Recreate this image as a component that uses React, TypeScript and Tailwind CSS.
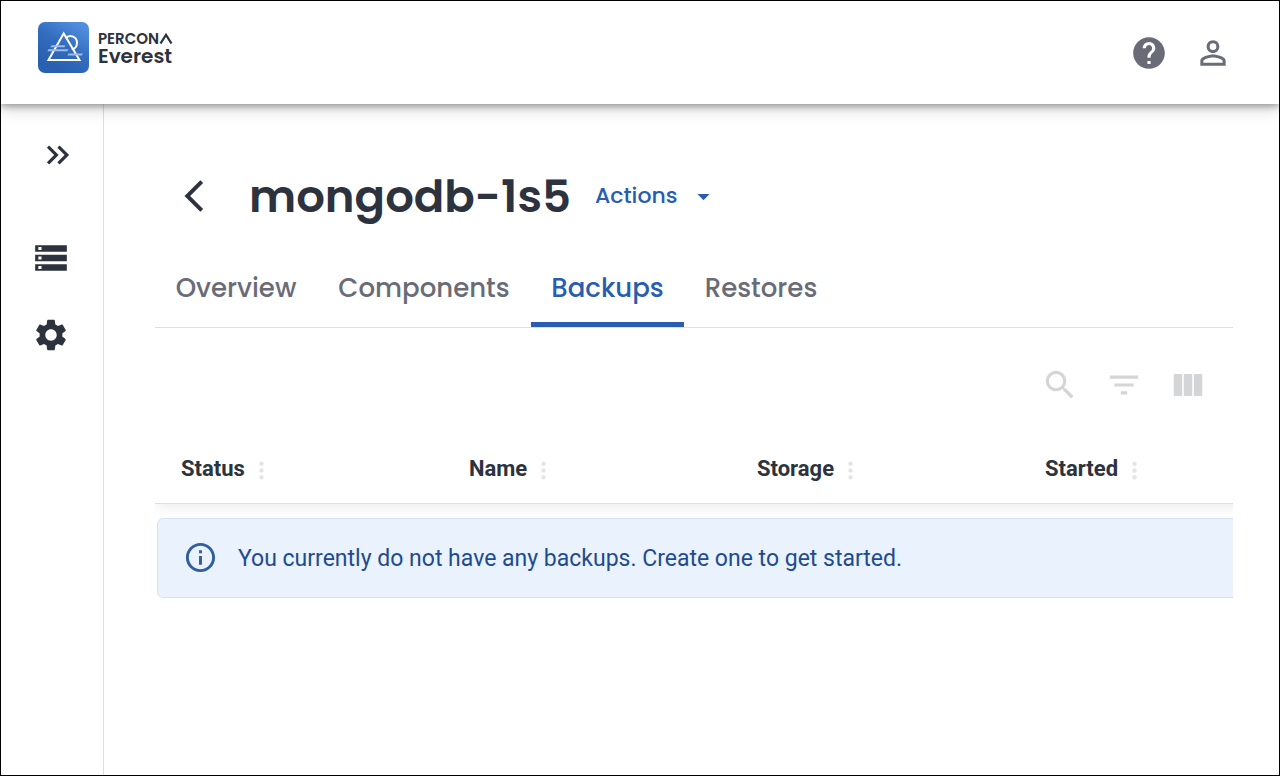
import {
  MdArrowBackIosNew,
  MdArrowDropDown,
  MdFilterList,
  MdHelp,
  MdInfoOutline,
  MdKeyboardDoubleArrowRight,
  MdMoreVert,
  MdPersonOutline,
  MdSearch,
  MdSettings,
  MdStorage,
  MdViewColumn,
} from "react-icons/md";

const tabs = [
  { label: "Overview", width: "min-w-[162px]" },
  { label: "Components", width: "min-w-[214px]" },
  { label: "Backups", width: "min-w-[153px]", active: true },
  { label: "Restores", width: "min-w-[154px]" },
];

const columns = ["Status", "Name", "Storage", "Started"];

function Logo() {
  return (
    <a href="#" aria-label="Percona Everest" className="flex items-center gap-[9px]">
      <svg viewBox="0 0 51 51" className="size-[51px]" fill="none" aria-hidden="true">
        <defs>
          <linearGradient id="tile" x1="14" y1="44" x2="40" y2="2" gradientUnits="userSpaceOnUse">
            <stop offset="0" stopColor="#2960b0" />
            <stop offset="0.5" stopColor="#346dbf" />
            <stop offset="1" stopColor="#508edd" />
          </linearGradient>
        </defs>
        <rect width="51" height="51" rx="7" fill="url(#tile)" />
        <path d="M28.5 15.5 C32 12.6 39 14.5 39 20.8 C39 24.5 36.8 27 33.8 27.2" stroke="#fff" strokeWidth="2" />
        <path d="M25.7 11.5 L10.5 38 H41.5 Z" stroke="#fff" strokeWidth="2" />
        <path d="M13.5 23.2 H27.5 L26.3 25.2 H12.3 Z" fill="#9dbce8" />
        <path d="M10.5 27.2 H30.5 L29.3 29.2 H9.3 Z" fill="#9dbce8" />
        <path d="M30.5 31.5 H45 L43.8 33.5 H29.3 Z" fill="#9dbce8" />
      </svg>
      <span className="flex flex-col text-[#2c323e] [font-family:Poppins,Inter,sans-serif]">
        <span className="flex items-center text-[15px] leading-4 font-semibold">
          PERCON
          <svg viewBox="0 0 14 11" className="h-[11px] w-[14px]" fill="none" aria-hidden="true">
            <path d="M1.5 10.5 L7 1.8 L12.5 10.5" stroke="currentColor" strokeWidth="2.2" />
          </svg>
        </span>
        <span className="text-[20px] leading-[18px] font-semibold">Everest</span>
      </span>
    </a>
  );
}

export default function App() {
  return (
    <div className="flex min-h-screen flex-col border border-black bg-white text-[#2c323e] [font-family:Roboto,sans-serif]">
      <header className="z-10 flex h-[103px] items-center justify-between pr-[47px] pb-[10px] pl-[37px] shadow-[0_3px_6px_rgba(0,0,0,0.3),0_6px_16px_rgba(0,0,0,0.14)]">
        <Logo />
        <div className="flex items-center gap-[26px] pt-[10px] text-[#696c76]">
          <button type="button" aria-label="Help">
            <MdHelp size={38} />
          </button>
          <button type="button" aria-label="Account">
            <MdPersonOutline size={38} />
          </button>
        </div>
      </header>

      <div className="flex flex-1">
        <nav aria-label="Main" className="flex w-[103px] shrink-0 flex-col items-center border-r border-[#dddee0] pt-8 pr-[2px]">
          <button type="button" aria-label="Expand menu" className="ml-[14px]">
            <MdKeyboardDoubleArrowRight size={38} />
          </button>
          <a href="#" aria-label="Databases" className="mt-[65px]">
            <MdStorage size={38} />
          </a>
          <a href="#" aria-label="Settings" className="mt-[39px]">
            <MdSettings size={38} />
          </a>
        </nav>

        <main className="min-w-0 flex-1 pt-16 pr-[46px] pl-[51px]">
          <div className="flex h-14 items-center pl-5 [font-family:Poppins,Inter,sans-serif]">
            <button type="button" aria-label="Back">
              <MdArrowBackIosNew size={38} />
            </button>
            <h1 className="ml-9 pt-[2px] text-[45px] leading-14 font-semibold">mongodb-1s5</h1>
            <button type="button" className="ml-6 flex items-center gap-3 text-[22px] leading-8 font-medium text-[#285db0]">
              Actions
              <MdArrowDropDown size={29} />
            </button>
          </div>

          <div role="tablist" className="mt-6 flex border-b border-[#dddee0] [font-family:Poppins,Inter,sans-serif]">
            {tabs.map((tab) => (
              <button
                key={tab.label}
                type="button"
                role="tab"
                aria-selected={!!tab.active}
                className={`${tab.width} h-[79px] border-b-5 pt-[6px] text-center text-[26px] leading-8 font-medium ${
                  tab.active ? "border-[#285db0] text-[#285db0]" : "border-transparent text-[#696c76]"
                }`}
              >
                {tab.label}
              </button>
            ))}
          </div>

          <div className="mt-[38px] flex justify-end gap-[26px] pr-[26px] text-[#d4d5d7]">
            <button type="button" aria-label="Search">
              <MdSearch size={38} />
            </button>
            <button type="button" aria-label="Filter">
              <MdFilterList size={38} />
            </button>
            <button type="button" aria-label="Show columns">
              <MdViewColumn size={38} />
            </button>
          </div>

          <div className="mt-[30px] overflow-x-hidden">
            <table className="w-full min-w-[1152px] table-fixed shadow-[0_6px_12px_-2px_rgba(0,0,0,0.07)]">
              <thead>
                <tr className="h-[69px] border-b border-[#dddee0]">
                  {columns.map((name) => (
                    <th key={name} scope="col" className="px-[26px] text-left text-[22px] font-bold">
                      <span className="flex items-center">
                        {name}
                        <button type="button" aria-label={`${name} column menu`} className="mt-1 ml-[3px] text-[#e4e5e6]">
                          <MdMoreVert size={27} />
                        </button>
                      </span>
                    </th>
                  ))}
                </tr>
              </thead>
            </table>
            <div
              role="status"
              className="mt-[14px] ml-[2px] flex h-20 min-w-[1148px] items-center rounded-md border border-[#d6e3f3] bg-[#eaf2fe] pl-[25px] text-[#1f4b8e]"
            >
              <MdInfoOutline size={35} className="shrink-0 text-[#2f5f9f]" />
              <p className="ml-5 pt-[2px] text-[23px] leading-8">You currently do not have any backups. Create one to get started.</p>
            </div>
          </div>
        </main>
      </div>
    </div>
  );
}
